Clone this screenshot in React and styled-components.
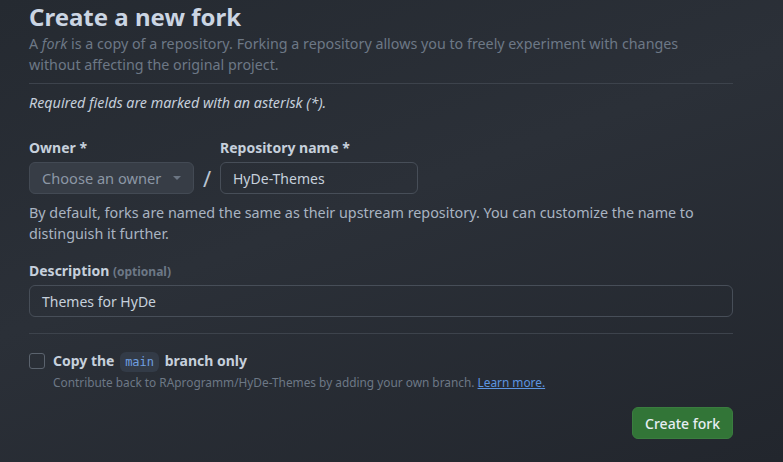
import React from "react"
import styled, { createGlobalStyle } from "styled-components"

const GlobalStyle = createGlobalStyle`
  html, body {
    margin: 0;
    padding: 0;
    height: 100%;
  }
  body {
    background: linear-gradient(160deg, #252a31 0%, #2b3038 45%, #22262d 100%);
    font-family: "Noto Sans", "Open Sans", sans-serif;
    color: #c9d3df;
  }
`

const Page = styled.div`
  width: 704px;
  padding: 2px 0 0 29px;
`

const Title = styled.h1`
  margin: 0;
  font-size: 24px;
  line-height: 30px;
  font-weight: 700;
  color: #cbd5e3;
`

const Lead = styled.p`
  margin: 1px 0 0;
  max-width: 680px;
  font-size: 14.3px;
  line-height: 21px;
  color: #6d7886;
`

const Divider = styled.hr`
  border: 0;
  border-top: 1px solid #3d434c;
  margin: ${props => props.$m || "8px 0 0"};
`

const Note = styled.p`
  margin: 8px 0 0;
  font-size: 14.3px;
  line-height: 21px;
  font-style: italic;
  color: #c5cfdb;
`

const Row = styled.div`
  display: flex;
  align-items: flex-end;
  margin-top: 24px;
`

const Field = styled.div`
  display: flex;
  flex-direction: column;
`

const Label = styled.label`
  font-size: 14px;
  line-height: 21px;
  font-weight: 700;
  color: #c6d0dc;
  margin-bottom: ${props => props.$gap || "4px"};
`

const Optional = styled.span`
  font-size: 12px;
  color: #6d7886;
`

const Select = styled.div`
  box-sizing: border-box;
  width: 165px;
  height: 32px;
  display: flex;
  align-items: center;
  justify-content: space-between;
  padding: 0 12px 0 12px;
  background: #373d46;
  border: 1px solid #434a54;
  border-radius: 6px;
  font-size: 14.6px;
  color: #8c97a5;
`

const Caret = styled.span`
  width: 0;
  height: 0;
  border-left: 4px solid transparent;
  border-right: 4px solid transparent;
  border-top: 4px solid #6b7582;
`

const Slash = styled.span`
  width: 26px;
  height: 32px;
  display: flex;
  align-items: center;
  justify-content: center;
  font-size: 22px;
  color: #b9c4d2;
`

const Input = styled.div`
  box-sizing: border-box;
  width: ${props => props.$w || "198px"};
  height: 32px;
  display: flex;
  align-items: center;
  padding: 0 12px;
  border: 1px solid #474e58;
  border-radius: 6px;
  font-size: 14px;
  color: #c6d0dc;
`

const Help = styled.p`
  margin: 8px 0 0;
  font-size: 14.35px;
  line-height: 21px;
  color: #a9b4c2;
`

const Block = styled.div`
  margin-top: 16px;
  display: flex;
  flex-direction: column;
`

const CheckRow = styled.div`
  display: flex;
  gap: 8px;
  margin-top: 18px;
`

const Box = styled.span`
  box-sizing: border-box;
  width: 16px;
  height: 16px;
  margin-top: 1px;
  border: 1px solid #5b636e;
  border-radius: 3px;
  flex-shrink: 0;
`

const CheckText = styled.div`
  display: flex;
  flex-direction: column;
`

const CheckLabel = styled.span`
  font-size: 14px;
  line-height: 18px;
  font-weight: 700;
  color: #c6d0dc;
`

const Code = styled.code`
  font-family: "DejaVu Sans Mono", "Liberation Mono", monospace;
  font-weight: 400;
  font-size: 12px;
  padding: 3px 5px;
  margin: 0 2px;
  background: #333b47;
  border-radius: 6px;
  color: #6f9fe0;
`

const Caption = styled.span`
  margin-top: 2px;
  font-size: 11.85px;
  line-height: 18px;
  color: #6d7886;
`

const Link = styled.a`
  color: #5d95e0;
  text-decoration: underline;
`

const Actions = styled.div`
  display: flex;
  justify-content: flex-end;
  margin-top: 16px;
`

const Button = styled.button`
  height: 32px;
  padding: 0 12px;
  background: #327537;
  border: 1px solid #3a7d3f;
  border-radius: 6px;
  font-family: inherit;
  font-size: 14px;
  font-weight: 500;
  color: #e6edf3;
`

export default function App() {
  return (
    <>
      <GlobalStyle />
      <Page>
        <Title>Create a new fork</Title>
        <Lead>
          A <em>fork</em> is a copy of a repository. Forking a repository allows you to freely
          experiment with changes without affecting the original project.
        </Lead>
        <Divider $m="8px 0 0" />
        <Note>Required fields are marked with an asterisk (*).</Note>
        <Row>
          <Field>
            <Label>Owner *</Label>
            <Select>
              Choose an owner
              <Caret />
            </Select>
          </Field>
          <Slash>/</Slash>
          <Field>
            <Label>Repository name *</Label>
            <Input>HyDe-Themes</Input>
          </Field>
        </Row>
        <Help>
          By default, forks are named the same as their upstream repository. You can customize the
          name to distinguish it further.
        </Help>
        <Block>
          <Label $gap="3px">
            Description <Optional>(optional)</Optional>
          </Label>
          <Input $w="704px">Themes for HyDe</Input>
        </Block>
        <Divider $m="16px 0 0" />
        <CheckRow>
          <Box />
          <CheckText>
            <CheckLabel>
              Copy the <Code>main</Code> branch only
            </CheckLabel>
            <Caption>
              Contribute back to RAprogramm/HyDe-Themes by adding your own branch.{" "}
              <Link href="#">Learn more.</Link>
            </Caption>
          </CheckText>
        </CheckRow>
        <Actions>
          <Button>Create fork</Button>
        </Actions>
      </Page>
    </>
  )
}
